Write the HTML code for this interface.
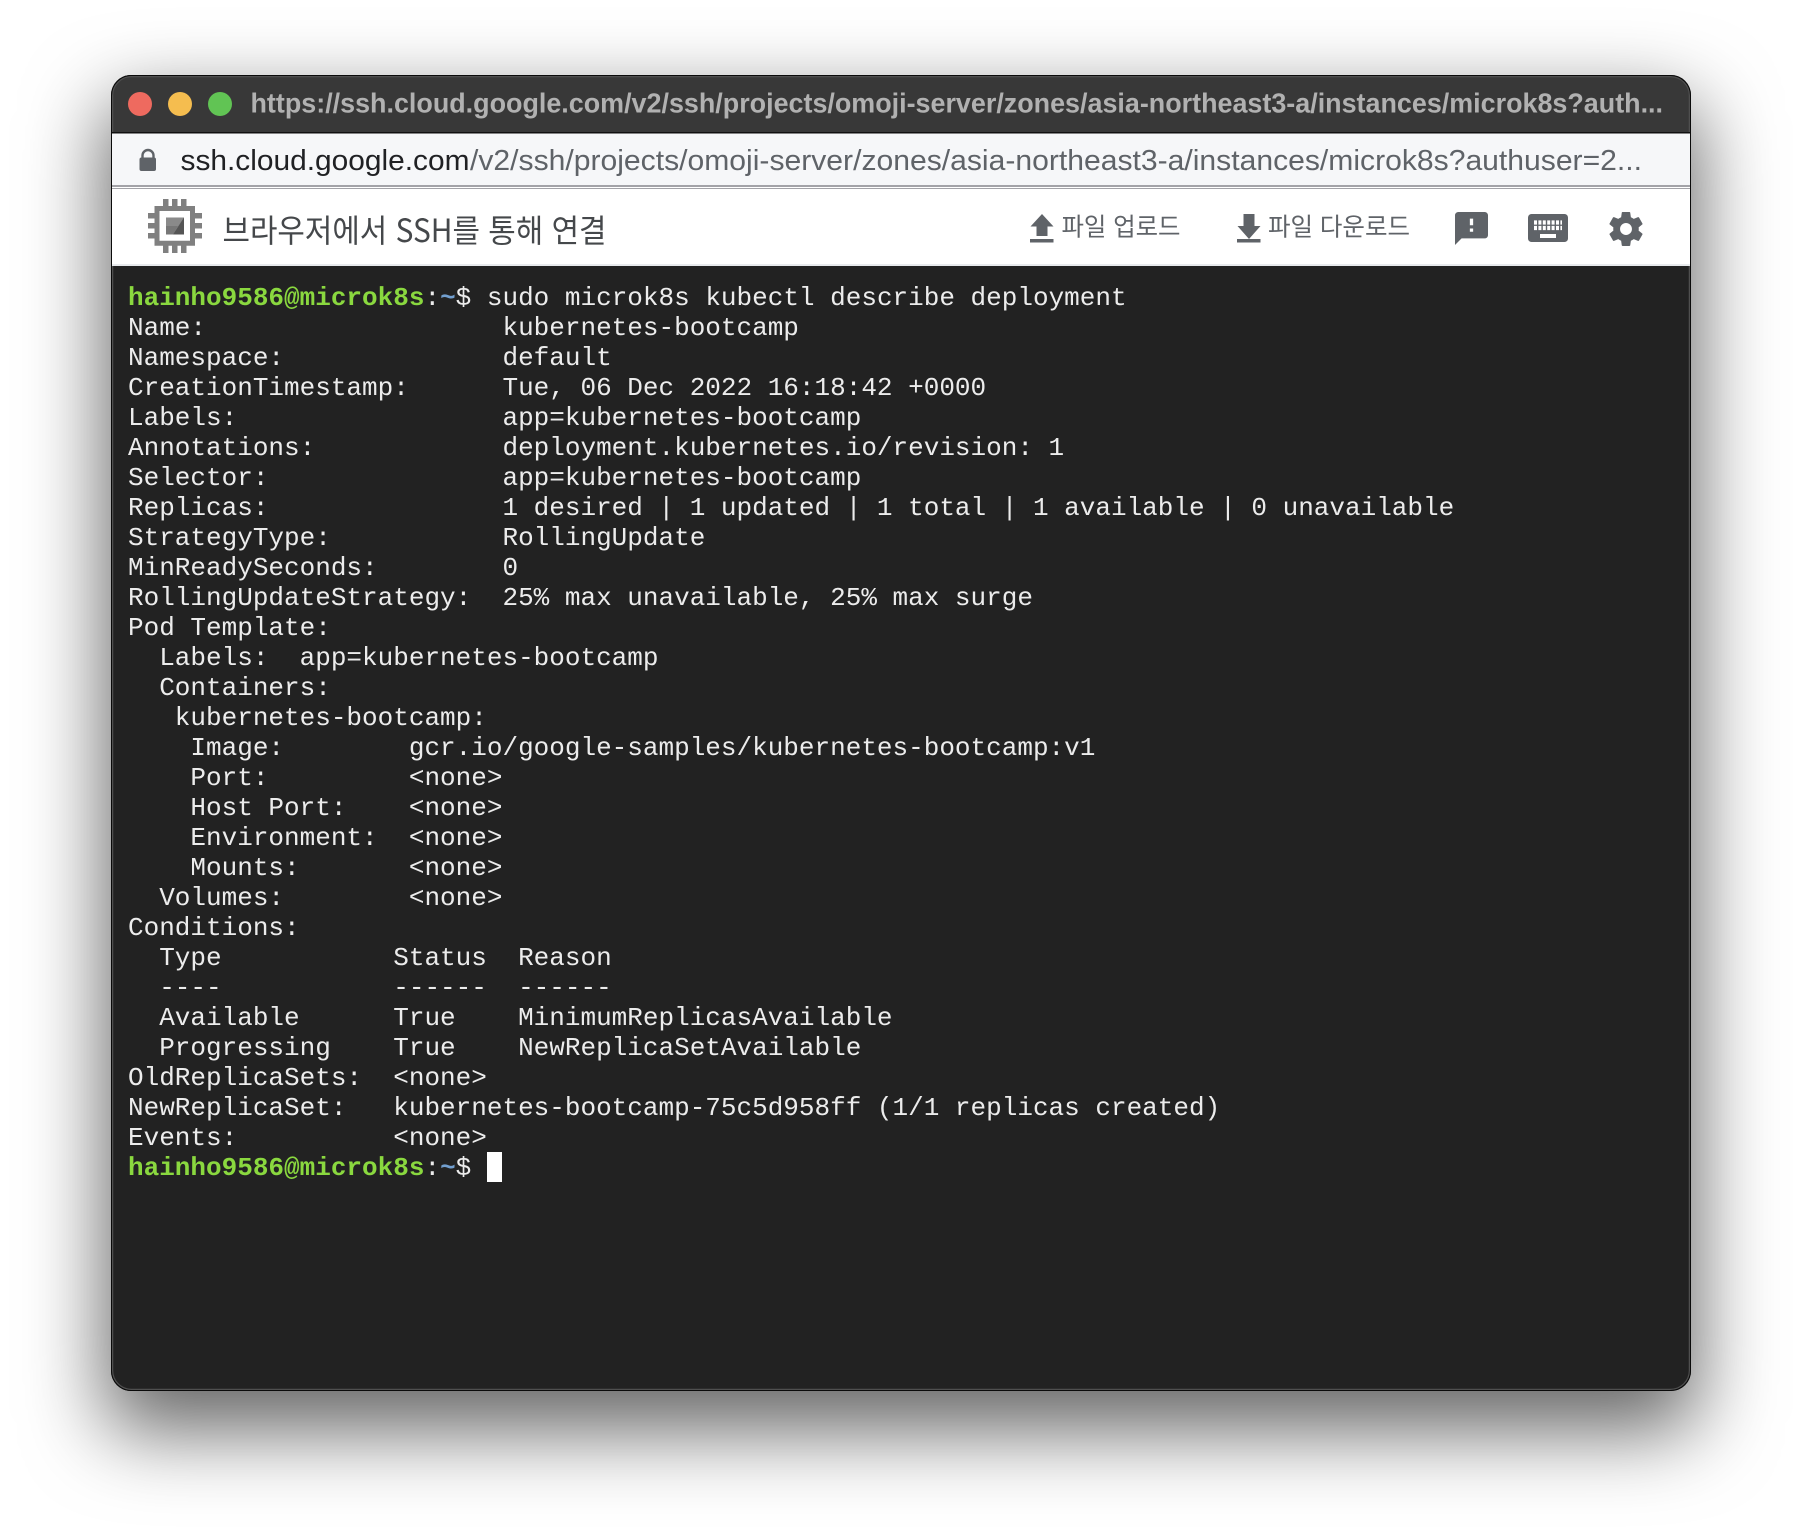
<!DOCTYPE html>
<html lang="ko"><head><meta charset="utf-8"><title>SSH</title>
<style>
html,body{margin:0;padding:0;background:#fff;width:1802px;height:1538px;overflow:hidden}
#win{position:absolute;left:111px;top:75px;width:1580px;height:1316px;border-radius:20px;box-shadow:0 34px 80px 6px rgba(0,0,0,.6);background:#222}
#svg{position:absolute;left:0;top:0}
pre{position:absolute;left:128px;top:282.5px;margin:0;font:26px/30px "Liberation Mono",monospace;color:#ececec;filter:blur(.3px)}
b{color:#8ad83f;font-weight:bold}
i{font-style:normal;color:#729fcf;font-weight:bold}
#cur{position:absolute;left:487px;top:1152px;width:15px;height:30px;background:#fff}
</style></head><body>
<div id="win"></div>
<svg id="svg" width="1802" height="1538" viewBox="0 0 1802 1538" xmlns="http://www.w3.org/2000/svg">
<defs><clipPath id="c"><rect x="111" y="75" width="1580" height="1316" rx="20"/></clipPath></defs>
<g clip-path="url(#c)">
<rect x="111" y="75" width="1580" height="58" fill="#383838"/>
<rect x="111" y="266" width="1580" height="1125" fill="#222"/>
<rect x="112.5" y="76.5" width="1577" height="1313" rx="19" fill="none" stroke="#4f4f4f" stroke-width="1.5"/>
<rect x="111" y="132" width="1580" height="1.5" fill="#111"/>
<rect x="111" y="133.5" width="1580" height="51.5" fill="#f6f7f9"/>
<rect x="111" y="185" width="1580" height="2" fill="#a3a3a8"/>
<rect x="111" y="187" width="1580" height="77" fill="#fff"/>
<rect x="111" y="188" width="1580" height="1" fill="#a3a3a8"/>
<rect x="111" y="264" width="1580" height="2" fill="#e8eaed"/>
</g>
<rect x="111.5" y="75.5" width="1579" height="1315" rx="20" fill="none" stroke="#0a0a0a" stroke-width="1"/>

<circle cx="140" cy="104" r="12" fill="#ee6a5f"/>
<circle cx="180" cy="104" r="12" fill="#f5bd4f"/>
<circle cx="220" cy="104" r="12" fill="#61c454"/>
<text x="250.5" y="112.5" font-family="Liberation Sans,sans-serif" font-weight="bold" font-size="27.5" fill="#b1b1b1" textLength="1412.5" lengthAdjust="spacingAndGlyphs">https://ssh.cloud.google.com/v2/ssh/projects/omoji-server/zones/asia-northeast3-a/instances/microk8s?auth...</text>

<path d="M142.5 158v-2.5a5.5 5.5 0 0 1 11 0V158" fill="none" stroke="#5f6368" stroke-width="2.4"/>
<rect x="139.5" y="157.5" width="16.5" height="13.5" rx="2" fill="#5f6368"/>
<text x="180.5" y="170" font-family="Liberation Sans,sans-serif" font-size="29" fill="#202124" textLength="289" lengthAdjust="spacingAndGlyphs">ssh.cloud.google.com</text>
<text x="470" y="170" font-family="Liberation Sans,sans-serif" font-size="29" fill="#5f6368" textLength="1172" lengthAdjust="spacingAndGlyphs">/v2/ssh/projects/omoji-server/zones/asia-northeast3-a/instances/microk8s?authuser=2...</text>

<g fill="#808080">
<path fill-rule="evenodd" d="M154.5 206h40.5v39.7h-40.5zM159.5 211v29.7h30.5V211z"/>
<rect x="163" y="199" width="5.5" height="7"/><rect x="172" y="199" width="5.5" height="7"/><rect x="181" y="199" width="5.5" height="7"/>
<rect x="163" y="245.5" width="5.5" height="7.5"/><rect x="172" y="245.5" width="5.5" height="7.5"/><rect x="181" y="245.5" width="5.5" height="7.5"/>
<rect x="148" y="213" width="6.5" height="5.5"/><rect x="148" y="223" width="6.5" height="5.5"/><rect x="148" y="233" width="6.5" height="5.5"/>
<rect x="195" y="213" width="7" height="5.5"/><rect x="195" y="223" width="7" height="5.5"/><rect x="195" y="233" width="7" height="5.5"/>
</g>
<rect x="166" y="217.5" width="18" height="17" fill="#8a8a8a"/>
<path d="M184 217.5v17h-11z" fill="#555"/>
<path d="M166 226h12l-5 8.5h-7z" fill="#777"/>

<text x="222.5" y="242" font-family="Noto Sans CJK KR,Liberation Sans,sans-serif" font-size="32" fill="#45484b" textLength="384" lengthAdjust="spacingAndGlyphs">브라우저에서 SSH를 통해 연결</text>

<path d="M1042 214l11.5 12.5h-6v9.5h-11v-9.5h-6z" fill="#5f6368"/>
<rect x="1030" y="239" width="23.5" height="3.5" fill="#5f6368"/>
<text x="1061.5" y="235.5" font-family="Noto Sans CJK KR,Liberation Sans,sans-serif" font-size="25" fill="#5f6368" textLength="119" lengthAdjust="spacingAndGlyphs">파일 업로드</text>

<path d="M1243.5 214h11v12h6l-11.5 13-11.5-13h6z" fill="#5f6368"/>
<rect x="1237" y="239" width="23.5" height="3.5" fill="#5f6368"/>
<text x="1268" y="235.5" font-family="Noto Sans CJK KR,Liberation Sans,sans-serif" font-size="25" fill="#5f6368" textLength="142" lengthAdjust="spacingAndGlyphs">파일 다운로드</text>

<path transform="translate(1451.7 208.7) scale(1.65)" fill="#5f6368" d="M20 2H4c-1.1 0-1.99.9-1.99 2L2 22l4-4h14c1.1 0 2-.9 2-2V4c0-1.1-.9-2-2-2zm-7 12h-2v-2h2v2zm0-4h-2V6h2v4z"/>

<rect x="1528" y="214" width="40" height="28" rx="3.5" fill="#5f6368"/>
<path d="M1534 222.5h28M1534 228h28" stroke="#fff" stroke-width="4.2" stroke-dasharray="3 1.4" fill="none"/>
<rect x="1540" y="234" width="16" height="4" fill="#fff"/>

<path transform="translate(1605.6 208.6) scale(1.7)" fill="#5f6368" d="M19.43 12.98c.04-.32.07-.64.07-.98s-.03-.66-.07-.98l2.11-1.65c.19-.15.24-.42.12-.64l-2-3.46c-.12-.22-.39-.3-.61-.22l-2.49 1c-.52-.4-1.08-.73-1.69-.98l-.38-2.65C14.46 2.18 14.25 2 14 2h-4c-.25 0-.46.18-.49.42l-.38 2.65c-.61.25-1.17.59-1.69.98l-2.49-1c-.23-.09-.49 0-.61.22l-2 3.46c-.13.22-.07.49.12.64l2.11 1.65c-.04.32-.07.65-.07.98s.03.66.07.98l-2.11 1.65c-.19.15-.24.42-.12.64l2 3.46c.12.22.39.3.61.22l2.49-1c.52.4 1.08.73 1.69.98l.38 2.65c.03.24.24.42.49.42h4c.25 0 .46-.18.49-.42l.38-2.65c.61-.25 1.17-.59 1.69-.98l2.49 1c.23.09.49 0 .61-.22l2-3.46c.12-.22.07-.49-.12-.64l-2.11-1.65zM12 15.5c-1.93 0-3.5-1.57-3.5-3.5s1.57-3.5 3.5-3.5 3.5 1.57 3.5 3.5-1.57 3.5-3.5 3.5z"/>
</svg>
<pre><b>hainho9586@microk8s</b>:<i>~</i>$ sudo microk8s kubectl describe deployment
Name:                   kubernetes-bootcamp
Namespace:              default
CreationTimestamp:      Tue, 06 Dec 2022 16:18:42 +0000
Labels:                 app=kubernetes-bootcamp
Annotations:            deployment.kubernetes.io/revision: 1
Selector:               app=kubernetes-bootcamp
Replicas:               1 desired | 1 updated | 1 total | 1 available | 0 unavailable
StrategyType:           RollingUpdate
MinReadySeconds:        0
RollingUpdateStrategy:  25% max unavailable, 25% max surge
Pod Template:
  Labels:  app=kubernetes-bootcamp
  Containers:
   kubernetes-bootcamp:
    Image:        gcr.io/google-samples/kubernetes-bootcamp:v1
    Port:         &lt;none&gt;
    Host Port:    &lt;none&gt;
    Environment:  &lt;none&gt;
    Mounts:       &lt;none&gt;
  Volumes:        &lt;none&gt;
Conditions:
  Type           Status  Reason
  ----           ------  ------
  Available      True    MinimumReplicasAvailable
  Progressing    True    NewReplicaSetAvailable
OldReplicaSets:  &lt;none&gt;
NewReplicaSet:   kubernetes-bootcamp-75c5d958ff (1/1 replicas created)
Events:          &lt;none&gt;
<b>hainho9586@microk8s</b>:<i>~</i>$ </pre>
<div id="cur"></div>
</body></html>
